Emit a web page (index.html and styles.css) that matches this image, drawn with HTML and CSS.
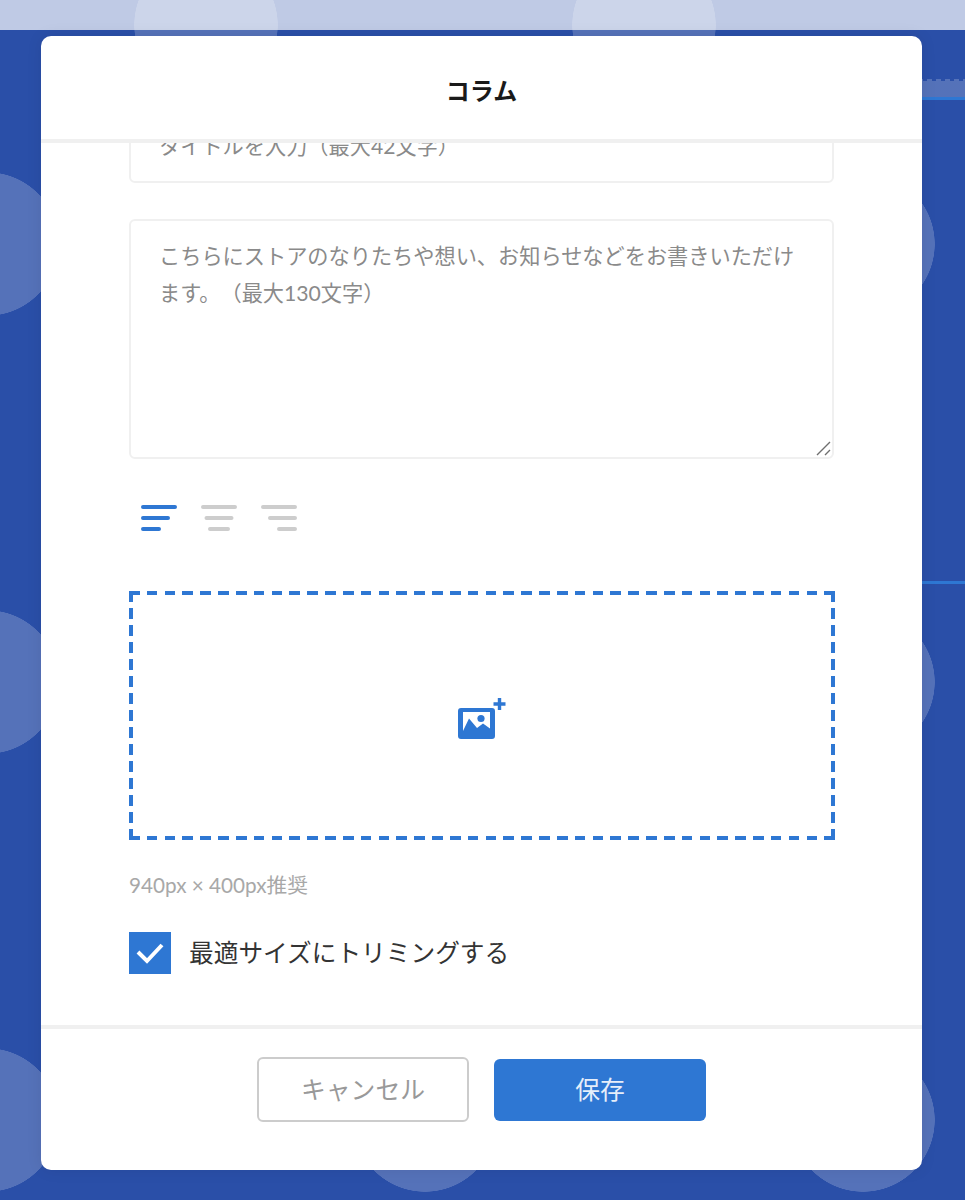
FILE: index.html
```html
<!DOCTYPE html>
<html lang="ja">
<head>
<meta charset="utf-8">
<title>コラム</title>
<link rel="stylesheet" href="styles.css">
</head>
<body>
<div class="page">
  <div class="backdrop-band"></div>
  <div class="backdrop-line backdrop-line-second"></div>
  <div class="strip"></div>
  <section class="modal">
    <header class="modal-head"><h1 class="modal-title">コラム</h1></header>
    <div class="modal-body">
      <div class="field field-title">タイトルを入力（最大42文字）</div>
      <div class="field-wrap">
        <div class="field field-text">こちらにストアのなりたちや想い、お知らせなどをお書きいただけます。（最大130文字）</div>
        <svg class="grip" viewBox="0 0 16 16"><path d="M1 14L14 1M9 14L14 9"/></svg>
      </div>
      <div class="aligns">
        <svg class="align-icon align-active" viewBox="0 0 36 26"><path d="M2 2H34M2 13H27M2 24H18"/></svg>
        <svg class="align-icon" viewBox="0 0 36 26"><path d="M2 2H34M5.500 13H30.500M9 24H27"/></svg>
        <svg class="align-icon" viewBox="0 0 36 26"><path d="M2 2H34M9 13H34M18 24H34"/></svg>
      </div>
      <div class="dropzone">
        <svg class="add-image" viewBox="0 0 48 41">
          <path class="add-image-fill" fill-rule="evenodd" d="M3 10H34a3 3 0 0 1 3 3V38a3 3 0 0 1-3 3H3a3 3 0 0 1-3-3V13a3 3 0 0 1 3-3ZM5 14V33L11 20.500L19 30L25 25.500L32 30.500V14Z"/>
          <circle class="add-image-fill" cx="23" cy="20.500" r="3.600"/>
          <path class="add-image-plus" d="M41.500 0V12M35.500 6H47.500"/>
        </svg>
      </div>
      <p class="hint">940px × 400px推奨</p>
      <div class="check-row">
        <span class="checkbox"><svg class="check-mark" viewBox="0 0 42 42"><path d="M9 20L18 29L33 13"/></svg></span>
        <span class="check-label">最適サイズにトリミングする</span>
      </div>
    </div>
    <footer class="modal-foot">
      <button class="btn btn-cancel" type="button">キャンセル</button>
      <button class="btn btn-save" type="button">保存</button>
    </footer>
  </section>
</div>
</body>
</html>
```

FILE: styles.css
```css
* { box-sizing: border-box; }

html, body { margin: 0; padding: 0; }

body {
  font-family: "Lato", "Noto Sans CJK JP", sans-serif;
  color: #333;
  text-spacing-trim: space-all;
}

.page {
  position: relative;
  width: 965px;
  height: 1200px;
  overflow: hidden;
  background-color: #2a4fa8;
  background-image:
    radial-gradient(circle 72px at 219px 219px, rgba(255,255,255,.2) 71.500px, rgba(255,255,255,0) 72px),
    radial-gradient(circle 72px at 219px 219px, rgba(255,255,255,.2) 71.500px, rgba(255,255,255,0) 72px);
  background-size: 438px 438px;
  background-position: -232px 25px, -13px -194px;
}

.backdrop-band {
  position: absolute;
  top: 79px;
  left: 900px;
  width: 65px;
  height: 21px;
  background:
    repeating-linear-gradient(to right, rgba(255,255,255,.2) 0 5px, transparent 5px 9px) left top / 100% 2px no-repeat,
    linear-gradient(rgba(255,255,255,.2), rgba(255,255,255,.2)) left 2px / 100% 100% no-repeat;
  border-bottom: 3px solid #2e77d3;
}

.backdrop-line {
  position: absolute;
  left: 900px;
  width: 65px;
  height: 3px;
  background: #2e77d3;
}

.backdrop-line-second { top: 581px; }

.strip {
  position: relative;
  height: 30px;
  background: rgba(255,255,255,.7);
}

.modal {
  position: relative;
  display: flex;
  flex-direction: column;
  width: 881px;
  height: 1134px;
  margin: 6px 0 0 41px;
  background: #fff;
  border-radius: 10px;
  box-shadow: 0 0 16px rgba(0,0,0,.08);
  overflow: hidden;
}

.modal-head {
  flex: none;
  display: flex;
  align-items: center;
  justify-content: center;
  height: 107px;
  padding-top: 7px;
  border-bottom: 4px solid #f0f0f0;
}

.modal-title {
  margin: 0;
  font-size: 24px;
  font-weight: 700;
  line-height: 34px;
  color: #1a1a1a;
}

.modal-body {
  flex: 1;
  min-height: 0;
  overflow: hidden;
  padding: 0 88px;
}

.field {
  border: 2px solid #f0f0f0;
  border-radius: 6px;
  font-size: 21.200px;
  line-height: 37px;
  color: #8a8a8a;
  padding: 17px 28px;
}

.field-title {
  height: 72px;
  margin-top: -32px;
  padding-top: 15px;
}

.field-wrap {
  position: relative;
  margin-top: 36px;
}

.field-text {
  height: 240px;
  overflow: hidden;
}

.grip {
  position: absolute;
  right: 2px;
  bottom: 2px;
  width: 16px;
  height: 16px;
  fill: none;
  stroke: #6f6f6f;
  stroke-width: 1.400;
}

.aligns {
  display: flex;
  gap: 24px;
  margin-top: 46px;
  padding-left: 12px;
}

.align-icon {
  display: block;
  width: 36px;
  height: 26px;
  fill: none;
  stroke: #cdcdcd;
  stroke-width: 4;
  stroke-linecap: round;
}

.align-active { stroke: #2e77d3; }

.dropzone {
  display: flex;
  align-items: center;
  justify-content: center;
  width: 706px;
  height: 249px;
  margin-top: 60px;
  padding-top: 5px;
  background-image:
    repeating-linear-gradient(to right, #2e77d3 0 10.600px, transparent 10.600px 17.830px),
    repeating-linear-gradient(to right, #2e77d3 0 10.600px, transparent 10.600px 17.830px),
    repeating-linear-gradient(to bottom, #2e77d3 0 10.600px, transparent 10.600px 17.030px),
    repeating-linear-gradient(to bottom, #2e77d3 0 10.600px, transparent 10.600px 17.030px);
  background-repeat: no-repeat;
  background-size: 100% 4px, 100% 4px, 4px 100%, 4px 100%;
  background-position: left top, left bottom, left top, right top;
}

.add-image {
  display: block;
  width: 48px;
  height: 41px;
}

.add-image-fill { fill: #2e77d3; }

.add-image-plus {
  fill: none;
  stroke: #2e77d3;
  stroke-width: 3.400;
}

.hint {
  margin: 30px 0 0;
  font-size: 20.700px;
  line-height: 30px;
  color: #a8a8a8;
}

.check-row {
  display: flex;
  align-items: center;
  gap: 18px;
  margin-top: 32px;
}

.checkbox {
  flex: none;
  width: 42px;
  height: 42px;
  background: #2e77d3;
}

.check-mark {
  display: block;
  width: 42px;
  height: 42px;
  fill: none;
  stroke: #fff;
  stroke-width: 4;
}

.check-label {
  font-size: 24.700px;
  line-height: 36px;
  color: #333;
}

.modal-foot {
  flex: none;
  display: flex;
  align-items: center;
  justify-content: center;
  gap: 25px;
  height: 145px;
  padding-bottom: 20px;
  border-top: 4px solid #f0f0f0;
}

.btn {
  font-family: inherit;
  font-size: 24.800px;
  border-radius: 6px;
  padding: 0 0 3px;
}

.btn-cancel {
  width: 212px;
  height: 65px;
  background: #fff;
  border: 2px solid #ccc;
  color: #999;
}

.btn-save {
  width: 212px;
  height: 62px;
  background: #2e77d3;
  border: 0;
  color: #e6eefa;
}
```
